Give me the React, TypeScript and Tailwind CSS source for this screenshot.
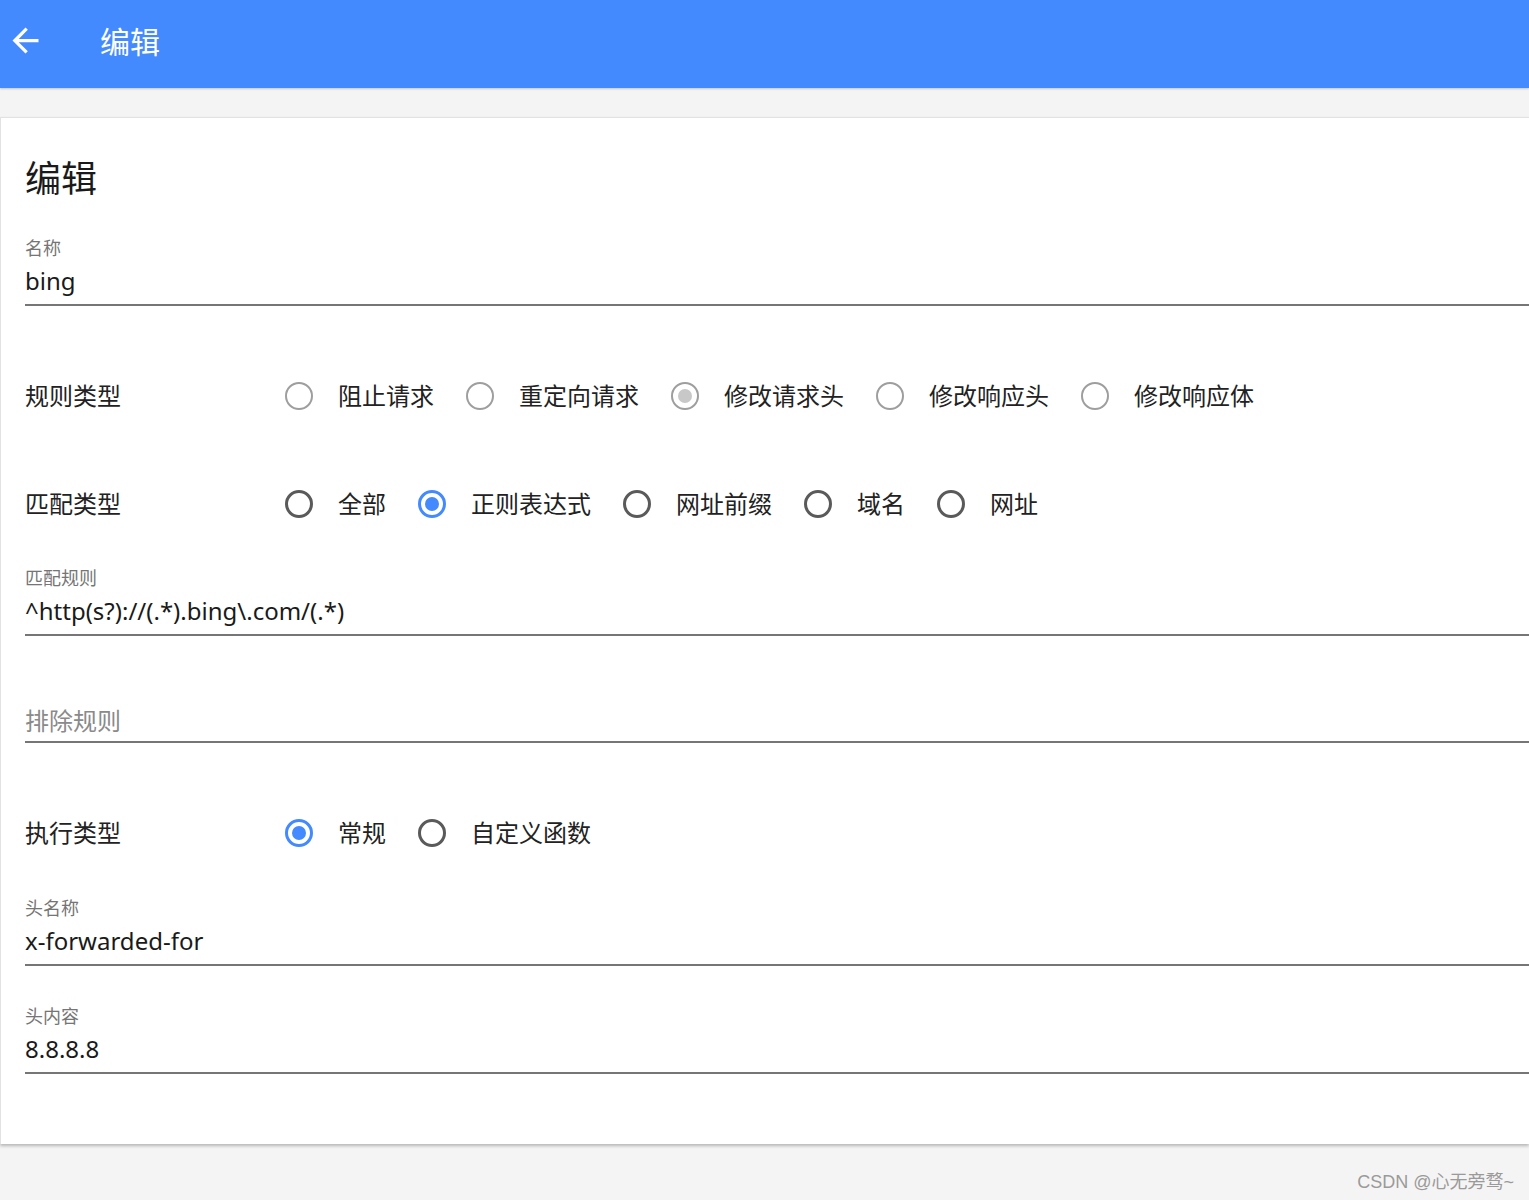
import React, { FC, useState } from "react";

const font = { fontFamily: '"Noto Sans", "Noto Sans CJK SC", sans-serif' };

interface RadioOpt {
  label: string;
}

interface RadioRowProps {
  title: string;
  options: RadioOpt[];
  value: number;
  disabled?: boolean;
}

const Radio: FC<{ checked: boolean; disabled?: boolean }> = ({ checked, disabled }) => {
  if (disabled) {
    return (
      <span className="w-[28px] h-[28px] rounded-full border-2 border-[#9e9e9e] flex items-center justify-center shrink-0">
        {checked && <span className="w-[14px] h-[14px] rounded-full bg-[#c8c8c8]" />}
      </span>
    );
  }
  return (
    <span
      className={
        checked
          ? "w-[28px] h-[28px] rounded-full border-[3px] border-[#448aff] flex items-center justify-center shrink-0"
          : "w-[28px] h-[28px] rounded-full border-[3px] border-[#5a5a5a] flex items-center justify-center shrink-0"
      }
    >
      {checked && <span className="w-[14px] h-[14px] rounded-full bg-[#448aff]" />}
    </span>
  );
};

const RadioRow: FC<RadioRowProps> = ({ title, options, value, disabled }) => {
  const [sel, setSel] = useState<number>(value);
  return (
    <div className="h-[108px] flex items-center">
      <div className="w-[260px] text-[24px] text-[#222]">{title}</div>
      <div className="flex items-center gap-[32px]">
        {options.map((o, i) => (
          <label
            key={o.label}
            className="flex items-center gap-[25px] cursor-pointer"
            onClick={() => !disabled && setSel(i)}
          >
            <Radio checked={sel === i} disabled={disabled} />
            <span className="text-[24px] text-[#222]">{o.label}</span>
          </label>
        ))}
      </div>
    </div>
  );
};

const Field: FC<{ label?: string; value?: string; placeholder?: string; className?: string }> = ({
  label,
  value,
  placeholder,
  className,
}) => (
  <div className={className}>
    {label && <div className="h-[24px] leading-[24px] text-[18px] text-[#757575]">{label}</div>}
    <div className={label ? "mt-[5px] h-[32px] leading-[32px] text-[24px] text-[#1a1a1a]" : "h-[32px] leading-[32px] text-[24px] text-[#8a8a8a]"}>
      {value ?? placeholder}
    </div>
    <div className={label ? "mt-[7px] h-[2px] bg-[#767676]" : "mt-[4px] h-[2px] bg-[#767676]"} />
  </div>
);

export default function App() {
  return (
    <div className="relative min-h-[1200px] bg-[#f5f4f4] overflow-hidden" style={font}>
      <header className="h-[88px] bg-[#448aff] flex items-center shadow-[0_1px_2px_rgba(0,0,0,0.2)]">
        <svg className="ml-[6px] mt-[-8px]" width="39" height="39" viewBox="0 0 24 24" fill="white">
          <path d="M20 11H7.83l5.59-5.59L12 4l-8 8 8 8 1.41-1.41L7.83 13H20v-2z" />
        </svg>
        <h1 className="ml-[55px] text-[30px] text-white mt-[-6px]">编辑</h1>
      </header>

      <main className="mt-[29px] bg-white border-l border-t border-[#e2e2e2] shadow-[0_2px_3px_rgba(0,0,0,0.25)] pl-[24px] pt-[39px] pb-[70px]">
        <h2 className="text-[36px] leading-[44px] text-[#1a1a1a]">编辑</h2>

        <Field className="mt-[35px]" label="名称" value="bing" />

        <div className="mt-[36px]">
          <RadioRow
            title="规则类型"
            value={2}
            disabled
            options={[
              { label: "阻止请求" },
              { label: "重定向请求" },
              { label: "修改请求头" },
              { label: "修改响应头" },
              { label: "修改响应体" },
            ]}
          />
          <RadioRow
            title="匹配类型"
            value={1}
            options={[
              { label: "全部" },
              { label: "正则表达式" },
              { label: "网址前缀" },
              { label: "域名" },
              { label: "网址" },
            ]}
          />
        </div>

        <Field className="mt-[8px]" label="匹配规则" value="^http(s?)://(.*).bing\.com/(.*)" />

        <Field className="mt-[69px]" placeholder="排除规则" />

        <div className="mt-[36px]">
          <RadioRow title="执行类型" value={0} options={[{ label: "常规" }, { label: "自定义函数" }]} />
        </div>

        <Field className="mt-[9px]" label="头名称" value="x-forwarded-for" />
        <Field className="mt-[38px]" label="头内容" value="8.8.8.8" />
      </main>

      <div
        className="absolute right-[15px] bottom-[4px] text-[18px] text-[#9a9a9a]"
        style={{ fontFamily: '"Liberation Sans", "Noto Sans CJK SC", sans-serif' }}
      >
        CSDN @心无旁骛~
      </div>
    </div>
  );
}
